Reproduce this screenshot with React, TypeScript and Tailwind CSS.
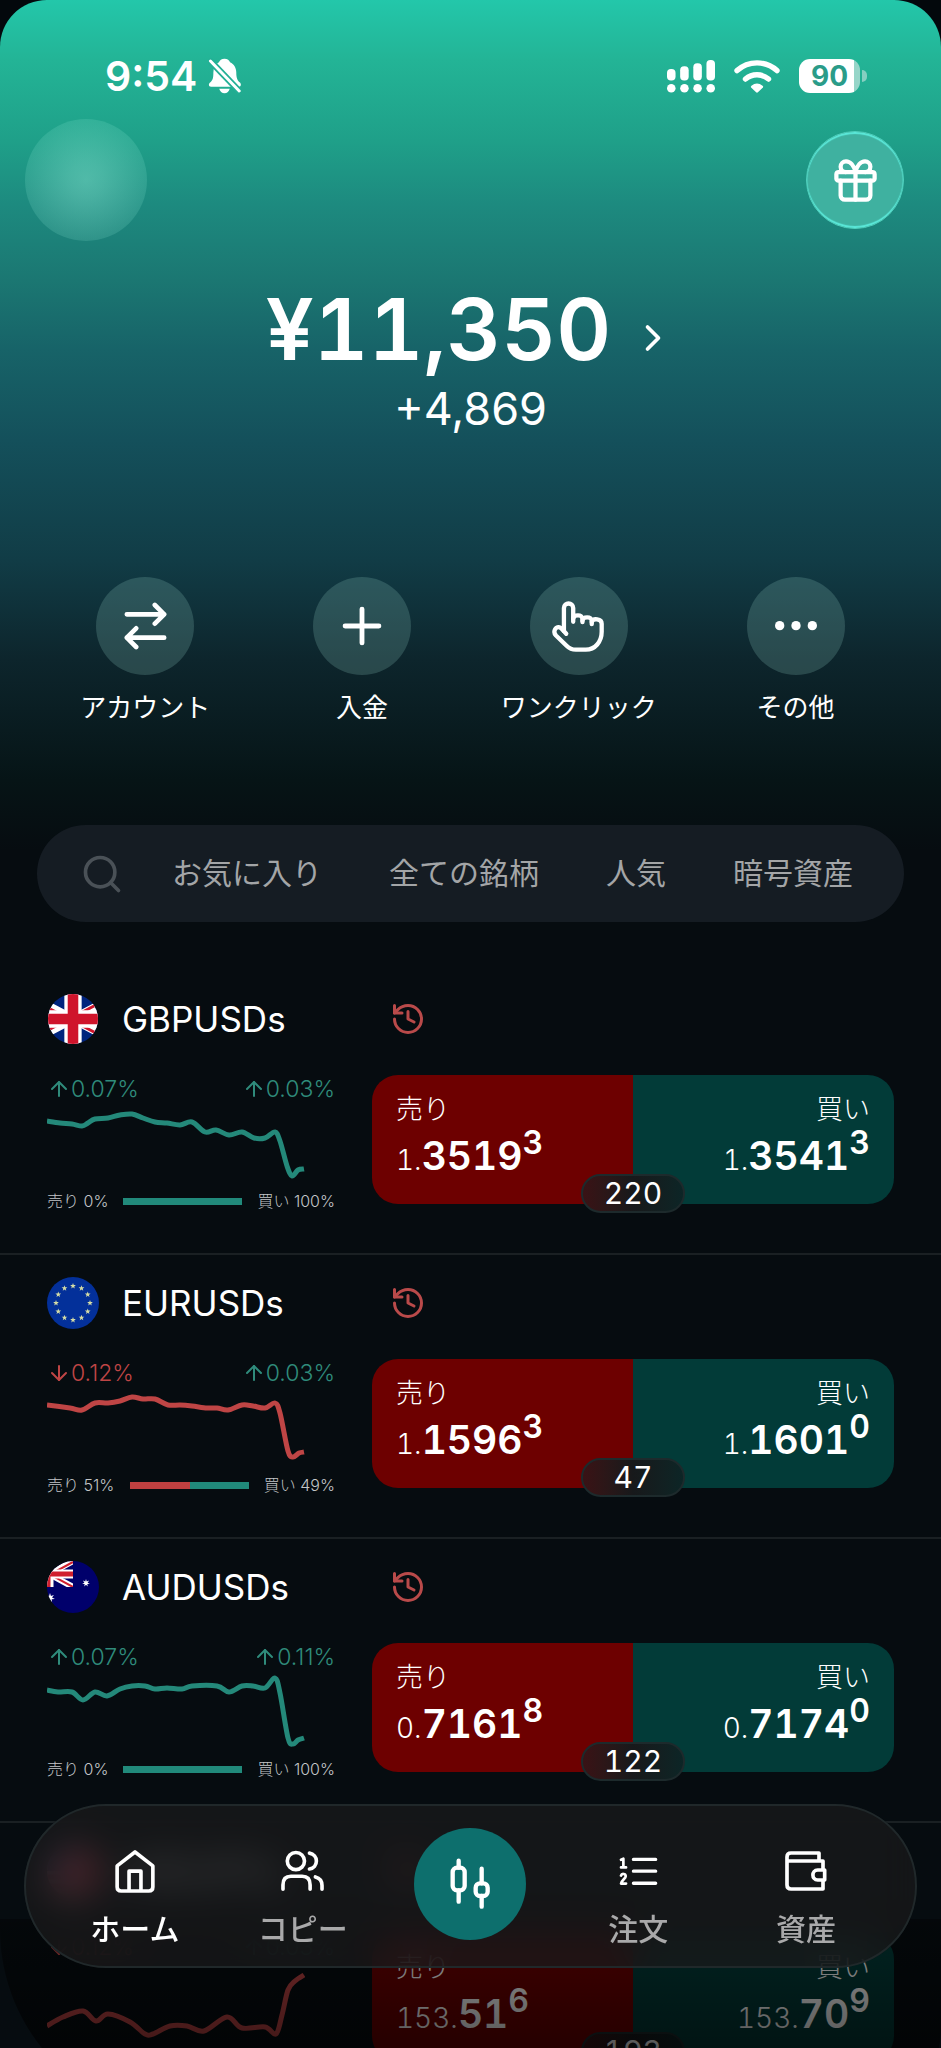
import { ReactNode } from "react";
import { ArrowDown, ArrowUp, ChevronRight, Gift, History, Plus, Search } from "lucide-react";

type Point = [number, number];

type PricePropType = {
	label: string;
	whole: string;
	main: string;
	pip: string;
	side: "sell" | "buy";
};

type Instrument = {
	symbol: string;
	flag: ReactNode;
	dayChange: number;
	hourChange: number;
	sellShare: number;
	trend: "up" | "down";
	points: Point[];
	sell: [string, string, string];
	buy: [string, string, string];
	spread: number;
};

/* FLAGS */
const FlagGB = () => (
	<svg viewBox="0 0 52 52" className="size-[52px] p-px">
		<clipPath id="gb">
			<circle cx="26" cy="26" r="26" />
		</clipPath>
		<g clipPath="url(#gb)">
			<rect width="52" height="52" fill="#00247d" />
			<path d="M-12 6 64 46M64 6-12 46" stroke="#fff" strokeWidth="9" />
			<path d="M-12 8 26 28M64 4 26 24M64 48 26 28M-12 44 26 24" stroke="#cf142b" strokeWidth="3" />
			<path d="M26 0v52M0 26h52" stroke="#fff" strokeWidth="18" />
			<path d="M26 0v52M0 26h52" stroke="#cf142b" strokeWidth="11" />
		</g>
	</svg>
);

const star = (cx: number, cy: number, r: number, spikes = 5) =>
	Array.from({ length: spikes * 2 }, (_, i) => {
		const radius = i % 2 ? r * 0.42 : r;
		const angle = (Math.PI * i) / spikes - Math.PI / 2;
		return `${cx + radius * Math.cos(angle)},${cy + radius * Math.sin(angle)}`;
	}).join(" ");

const FlagEU = () => (
	<svg viewBox="0 0 52 52" className="size-[52px] rounded-full">
		<rect width="52" height="52" fill="#03309a" />
		{Array.from({ length: 12 }, (_, i) => {
			const angle = (Math.PI * i) / 6;
			return (
				<polygon
					key={i}
					points={star(26 + 17 * Math.cos(angle), 26 + 17 * Math.sin(angle), 3)}
					fill="#d5dca6"
				/>
			);
		})}
	</svg>
);

const FlagAU = () => (
	<svg viewBox="0 0 52 52" className="size-[52px] rounded-full">
		<rect width="52" height="52" fill="#00006b" />
		<svg width="26" height="26" viewBox="0 0 26 26">
			<path d="M-22 26 26 0M-22 0 26 26" stroke="#fff" strokeWidth="6" />
			<path d="M-22 27 26 1M-22 0 26 26" stroke="#d0202e" strokeWidth="2" />
			<path d="M0 13h26M2 0v26" stroke="#fff" strokeWidth="9" />
			<path d="M0 13h26M1 0v26" stroke="#d0202e" strokeWidth="5" />
		</svg>
		<polygon points={star(39, 22, 4, 7)} fill="#fff" />
		<polygon points={star(3, 37, 5, 7)} fill="#fff" />
	</svg>
);

const FlagJP = () => (
	<svg viewBox="0 0 52 52" className="size-[52px] rounded-full">
		<rect width="52" height="52" fill="#d9b3bd" />
		<rect width="22" height="26" fill="#31417c" />
		<path d="M22 5h30M22 14h30M22 23h30M0 32h52M0 41h52" stroke="#c83348" strokeWidth="5" />
		<circle cx="34" cy="28" r="17" fill="#e8304a" />
	</svg>
);

const instruments: Instrument[] = [
	{
		symbol: "GBPUSDs",
		flag: <FlagGB />,
		dayChange: 0.07,
		hourChange: 0.03,
		sellShare: 0,
		trend: "up",
		points: [
			[0, 18], [13, 20], [25, 21], [35, 23], [41, 20], [48, 16], [61, 15], [73, 12], [85, 11],
			[96, 15], [108, 19], [120, 20], [133, 22], [145, 19], [158, 29], [169, 27], [182, 32],
			[195, 29], [207, 35], [218, 35], [228, 29], [233, 38], [240, 63], [245, 73], [251, 67],
			[257, 66],
		],
		sell: ["1.", "3519", "3"],
		buy: ["1.", "3541", "3"],
		spread: 220,
	},
	{
		symbol: "EURUSDs",
		flag: <FlagEU />,
		dayChange: -0.12,
		hourChange: 0.03,
		sellShare: 51,
		trend: "down",
		points: [
			[0, 18], [23, 21], [35, 23], [48, 16], [61, 16], [73, 14], [85, 10], [96, 12], [108, 12],
			[121, 18], [133, 18], [145, 19], [160, 21], [170, 21], [181, 23], [195, 18], [206, 19],
			[218, 21], [228, 16], [233, 26], [241, 64], [246, 70], [252, 66], [257, 65],
		],
		sell: ["1.", "1596", "3"],
		buy: ["1.", "1601", "0"],
		spread: 47,
	},
	{
		symbol: "AUDUSDs",
		flag: <FlagAU />,
		dayChange: 0.07,
		hourChange: 0.11,
		sellShare: 0,
		trend: "up",
		points: [
			[0, 19], [11, 21], [25, 21], [36, 29], [48, 21], [60, 25], [73, 18], [85, 15], [98, 15],
			[108, 18], [120, 17], [135, 18], [145, 15], [170, 15], [182, 21], [195, 15], [206, 15],
			[218, 17], [228, 7], [233, 22], [241, 67], [246, 73], [251, 69], [257, 67],
		],
		sell: ["0.", "7161", "8"],
		buy: ["0.", "7174", "0"],
		spread: 122,
	},
	{
		symbol: "USDJPYs",
		flag: <FlagJP />,
		dayChange: -0.12,
		hourChange: 0.03,
		sellShare: 51,
		trend: "down",
		points: [
			[0, 65], [16, 56], [36, 50], [49, 60], [61, 53], [83, 61], [98, 73], [106, 73], [123, 65],
			[140, 65], [157, 70], [180, 56], [195, 67], [218, 66], [229, 73], [235, 54], [241, 29],
			[248, 20], [257, 14],
		],
		sell: ["153.", "51", "6"],
		buy: ["153.", "70", "9"],
		spread: 193,
	},
];

/* ICONS */
const BellOff = () => (
	<svg viewBox="0 0 100 110" className="h-[36px] w-[33px]" fill="#fff">
		<path d="M50 2c9 0 15 5 17 11 12 6 19 17 19 31 0 18 4 25 12 32 4 5 2 12-5 12H9c-7 0-9-7-4-12 9-8 11-14 11-32 0-14 6-25 17-31C35 7 41 2 50 2Z" />
		<path d="M34 94h32c-2 8-8 14-16 14s-14-6-16-14Z" />
		<path d="M2 4 98 104" stroke="#23b096" strokeWidth="20" />
		<path d="M7 9 95 101" stroke="#fff" strokeWidth="9" strokeLinecap="round" />
	</svg>
);

const Signal = () => (
	<svg viewBox="0 0 146 100" className="h-[33px] w-[48px]" fill="#fff">
		<rect x="0" y="27" width="26" height="35" rx="12" />
		<rect x="40" y="19" width="26" height="43" rx="12" />
		<rect x="80" y="10" width="26" height="52" rx="12" />
		<rect x="120" y="0" width="26" height="62" rx="12" />
		<circle cx="13" cy="86" r="13" />
		<circle cx="53" cy="86" r="13" />
		<circle cx="93" cy="86" r="13" />
		<circle cx="133" cy="86" r="13" />
	</svg>
);

const Wifi = () => (
	<svg viewBox="0 0 136 100" className="h-[34px] w-[46px]" fill="none" stroke="#fff" strokeLinecap="round">
		<path d="M9 34a88 88 0 0 1 118 0" strokeWidth="16" />
		<path d="M34 59a52 52 0 0 1 68 0" strokeWidth="16" />
		<path d="M54 82q14-11 28 0L68 95Z" fill="#fff" strokeWidth="8" strokeLinejoin="round" />
	</svg>
);

const SwapIcon = () => (
	<svg viewBox="0 0 128 144" className="h-12 w-[43px]" fill="none" stroke="#fff" strokeWidth="14" strokeLinecap="round" strokeLinejoin="round">
		<path d="M8 37h112M92 9l28 28-28 28" />
		<path d="M120 107H8M36 79 8 107l28 28" />
	</svg>
);

const HandIcon = () => (
	<svg viewBox="250 116 160 160" className="size-[53px]" fill="none" stroke="#fff" strokeWidth="13" strokeLinecap="round" strokeLinejoin="round">
		<path d="M293 218l-7-8v-70c0-18 28-18 28 0v42" />
		<path d="M314 172c2-13 28-13 28 1v10" />
		<path d="M342 178c2-13 28-13 28 1v10" />
		<path d="M370 182c4-12 30-10 30 6v24c0 30-20 54-48 54h-30c-12 0-20-4-28-12l-32-31c-11-12 0-31 14-23l10 10" />
	</svg>
);

const DotsIcon = () => (
	<svg viewBox="0 0 126 28" className="w-[42px]" fill="#fff">
		<circle cx="14" cy="14" r="14" />
		<circle cx="63" cy="14" r="14" />
		<circle cx="112" cy="14" r="14" />
	</svg>
);

const HomeIcon = () => (
	<svg viewBox="0 0 120 130" className="h-[43px] w-10" fill="none" stroke="#fff" strokeWidth="11" strokeLinejoin="round">
		<path d="M6 48 60 6l54 42v64q0 12-12 12H18q-12 0-12-12Z" />
		<path d="M42 124V64h36v60" />
	</svg>
);

const CopyIcon = () => (
	<svg viewBox="0 0 130 126" className="h-[42px] w-[43px]" fill="none" stroke="#fff" strokeWidth="11" strokeLinecap="round">
		<circle cx="45" cy="33" r="26" />
		<path d="M6 118v-13c0-18 10-26 24-26h34c14 0 24 8 24 26v13" />
		<path d="M86 9c13 2 21 12 21 24s-8 22-21 24" />
		<path d="M104 81c12 3 20 12 20 26v11" />
	</svg>
);

const OrdersIcon = () => (
	<svg viewBox="0 0 116 86" className="h-[29px] w-[39px]" fill="none" stroke="#fff" strokeWidth="10" strokeLinecap="round" strokeLinejoin="round">
		<path d="M43 7h66M43 42h66M43 78h66" />
		<path d="M6 8l7-3v25M6 31h15M6 55c2-7 14-6 14 2 0 7-14 13-14 22h15" strokeWidth="8" />
	</svg>
);

const WalletIcon = () => (
	<svg viewBox="0 0 126 120" className="h-10 w-[42px]" fill="none" stroke="#fff" strokeWidth="11" strokeLinejoin="round">
		<path d="M102 28V6H18Q6 6 6 18v84q0 12 12 12h96V88" />
		<path d="M6 30h108v26" />
		<path d="M119 57H98c-19 0-19 30 0 30h21Z" />
	</svg>
);

const CandlesIcon = () => (
	<svg viewBox="0 0 132 156" className="h-[52px] w-11" fill="none" stroke="#fff" strokeWidth="13" strokeLinecap="round">
		<rect x="14" y="29" width="36" height="68" rx="13" />
		<path d="M32 8v21M32 97v34" />
		<rect x="83" y="76" width="36" height="38" rx="13" />
		<path d="M101 32v44M101 114v32" />
	</svg>
);

/* SPARKLINE */
const toSmoothPath = (points: Point[]) =>
	points.reduce((path, [x, y], i) => {
		if (i === 0) return `M${x} ${y}`;
		const [x0, y0] = points[i - 1];
		const [px, py] = points[i - 2] ?? points[i - 1];
		const [nx, ny] = points[i + 1] ?? points[i];
		return `${path}C${x0 + (x - px) / 6} ${y0 + (y - py) / 6} ${x - (nx - x0) / 6} ${y - (ny - y0) / 6} ${x} ${y}`;
	}, "");

const Sparkline = ({ points, trend }: { points: Point[]; trend: "up" | "down" }) => (
	<svg viewBox="0 0 258 88" className="h-[88px] w-[258px]" fill="none">
		<path d={toSmoothPath(points)} stroke={trend === "up" ? "#24897a" : "#bf4545"} strokeWidth="5" />
	</svg>
);

const Change = ({ value }: { value: number }) => {
	const Arrow = value < 0 ? ArrowDown : ArrowUp;

	return (
		<span className={`flex items-center text-[23px] leading-7 font-light ${value < 0 ? "text-[#bf4545]" : "text-[#2f8b7b]"}`}>
			<Arrow size={24} strokeWidth={2} />
			{Math.abs(value).toFixed(2)}%
		</span>
	);
};

const Price = ({ label, whole, main, pip, side }: PricePropType) => (
	<button
		className={`flex flex-1 flex-col gap-[11px] px-6 pt-[19px] pb-[29px] ${
			side === "sell" ? "items-start bg-[#6d0000]" : "items-end bg-[#023b38]"
		}`}
	>
		<span className="text-[27px] leading-8 font-light">{label}</span>
		<span className="flex items-baseline tabular-nums">
			<span className="text-[28px] leading-7 font-light">{whole}</span>
			<span className="text-[39px] leading-[38px] font-semibold">{main}</span>
			<sup className="text-[32px] leading-8 font-semibold">{pip}</sup>
		</span>
	</button>
);

const InstrumentRow = ({ item }: { item: Instrument }) => (
	<li className="grid grid-cols-[288px_1fr] gap-x-[37px] gap-y-[30px] border-b-2 border-[#1a2023] px-[47px] pt-[22px] pb-[49px] last:gap-y-9">
		<h2 className="flex items-center gap-[23px] text-[35px] leading-[52px]">
			{item.flag}
			{item.symbol}
		</h2>
		<button aria-label="履歴" className="w-fit pl-[18px] text-[#b94a4a]">
			<History size={36} strokeWidth={2} />
		</button>

		{/* STATS */}
		<div className="flex flex-col">
			<div className="flex justify-between">
				<Change value={item.dayChange} />
				<Change value={item.hourChange} />
			</div>
			<Sparkline points={item.points} trend={item.trend} />
			<div className="flex h-[13px] items-center justify-between pt-[7px] text-[16px] leading-6 font-light text-[#c3c6c8]">
				<span>売り {item.sellShare}%</span>
				<div className="flex h-[7px] w-[119px] bg-[#218a7b]">
					<div className="bg-[#bf4040]" style={{ width: `${item.sellShare}%` }} />
				</div>
				<span>買い {100 - item.sellShare}%</span>
			</div>
		</div>

		{/* PRICES */}
		<div className="relative flex">
			<div className="flex flex-1 overflow-hidden rounded-[26px]">
				<Price label="売り" whole={item.sell[0]} main={item.sell[1]} pip={item.sell[2]} side="sell" />
				<Price label="買い" whole={item.buy[0]} main={item.buy[1]} pip={item.buy[2]} side="buy" />
			</div>
			<span className="absolute -bottom-[9px] left-1/2 w-[104px] -translate-x-1/2 rounded-full border-2 border-[#1d2a2c] bg-linear-to-r from-[#3a1215] via-[#17191b] to-[#0c2526] text-center text-[30px] leading-[35px] tabular-nums">
				{item.spread}
			</span>
		</div>
	</li>
);

const actions = [
	{ label: "アカウント", icon: <SwapIcon /> },
	{ label: "入金", icon: <Plus size={58} strokeWidth={2} /> },
	{ label: "ワンクリック", icon: <HandIcon /> },
	{ label: "その他", icon: <DotsIcon /> },
];

const categories = ["お気に入り", "全ての銘柄", "人気", "暗号資産"];

const NavItem = ({ label, icon, active }: { label: string; icon: ReactNode; active?: boolean }) => (
	<a href="#" className={`flex flex-col items-center gap-4 pt-6 text-[30px] leading-10 font-medium ${active ? "text-white" : "text-[#a9a9aa]"}`}>
		<span className="flex h-11 items-center">{icon}</span>
		{label}
	</a>
);

const App = () => (
	<div className="h-screen overflow-hidden bg-[#03080c] font-[Inter,'Noto_Sans_CJK_JP',sans-serif] text-white">
		<main className="relative h-full overflow-hidden rounded-t-[47px] bg-[#060c10] bg-[linear-gradient(180deg,#23c7aa_0px,#23b496_60px,#1fa089_140px,#1d8a7f_205px,#1b7772_280px,#176368_350px,#14505b_440px,#113c46_560px,#0d252c_660px,#061416_780px,#060c10_850px)]">
			{/* STATUS BAR */}
			<div className="flex items-center justify-between pt-[58px] pr-[74px] pl-[105px]">
				<div className="flex items-center gap-[11px]">
					<span className="text-[41px] leading-9 font-semibold">9:54</span>
					<BellOff />
				</div>
				<div className="flex items-center gap-[19px]">
					<Signal />
					<Wifi />
					<div className="flex items-center gap-[2px]">
						<span className="h-[34px] w-[61px] rounded-[11px] bg-[linear-gradient(90deg,#fff_90%,#96d5c8_90%)] text-center text-[28px] leading-[34px] font-bold text-[#2a9c89]">
							90
						</span>
						<span className="h-3 w-[5px] rounded-r-full bg-[#86cfc1]" />
					</div>
				</div>
			</div>

			{/* PROFILE */}
			<div className="flex items-center justify-between pt-[25px] pr-[37px] pl-[25px]">
				<button
					aria-label="プロフィール"
					className="size-[122px] rounded-full bg-[radial-gradient(circle,rgba(150,240,220,0.42)_0%,rgba(150,240,220,0.36)_20%,rgba(150,240,220,0.16)_70%)]"
				/>
				<button
					aria-label="ギフト"
					className="flex size-[98px] items-center justify-center rounded-full border border-[#4fd0bd] bg-[#3fb1a0] shadow-[inset_0_2px_1px_#5be9da,inset_0_-2px_1px_#5be9da]"
				>
					<Gift size={51} strokeWidth={2} />
				</button>
			</div>

			{/* BALANCE */}
			<div className="mt-[49px] flex flex-col items-center gap-[15px]">
				<a href="#" className="flex items-center gap-5 text-[85px] leading-20 font-semibold tabular-nums">
					¥11,350
					<ChevronRight size={44} strokeWidth={2} className="mt-4" />
				</a>
				<p className="text-[45px] leading-12">+4,869</p>
			</div>

			{/* ACTIONS */}
			<div className="mt-[144px] grid grid-cols-4 px-[37px]">
				{actions.map(({ label, icon }) => (
					<button key={label} className="flex flex-col items-center gap-[17px] text-[26px] leading-8">
						<span className="flex size-[98px] items-center justify-center rounded-full bg-[#7fb8b0]/25">{icon}</span>
						{label}
					</button>
				))}
			</div>

			{/* CATEGORIES */}
			<div className="mx-[37px] mt-[101px] flex h-[97px] items-center justify-between rounded-full bg-[#151c23] pr-[51px] pl-[43px] text-[30px] text-[#a3a5a7]">
				<button aria-label="検索" className="text-[#4a5157]">
					<Search size={44} strokeWidth={2} />
				</button>
				<div className="flex gap-[67px]">
					{categories.map((category) => (
						<button key={category}>{category}</button>
					))}
				</div>
			</div>

			{/* INSTRUMENTS */}
			<ul className="mt-[49px]">
				{instruments.map((item) => (
					<InstrumentRow key={item.symbol} item={item} />
				))}
			</ul>

			{/* BOTTOM FADE */}
			<div className="pointer-events-none absolute inset-x-0 bottom-0 h-[129px] overflow-hidden">
				<div className="h-[200px] rounded-br-[90px] rounded-bl-[190px] bg-linear-to-b from-black/40 to-black/80" />
			</div>

			{/* BOTTOM NAV */}
			<nav className="absolute inset-x-6 bottom-20 grid grid-cols-5 items-start rounded-[82px] border-2 border-[#20282a] bg-[#191a1b]/75 px-[25px] pt-[19px] pb-[17px] backdrop-blur-[18px]">
				<NavItem label="ホーム" icon={<HomeIcon />} active />
				<NavItem label="コピー" icon={<CopyIcon />} />
				<button aria-label="トレード" className="mt-[3px] flex size-28 items-center justify-center justify-self-center rounded-full bg-[#0d6f6d]">
					<CandlesIcon />
				</button>
				<NavItem label="注文" icon={<OrdersIcon />} />
				<NavItem label="資産" icon={<WalletIcon />} />
			</nav>
		</main>
	</div>
);

export default App;
